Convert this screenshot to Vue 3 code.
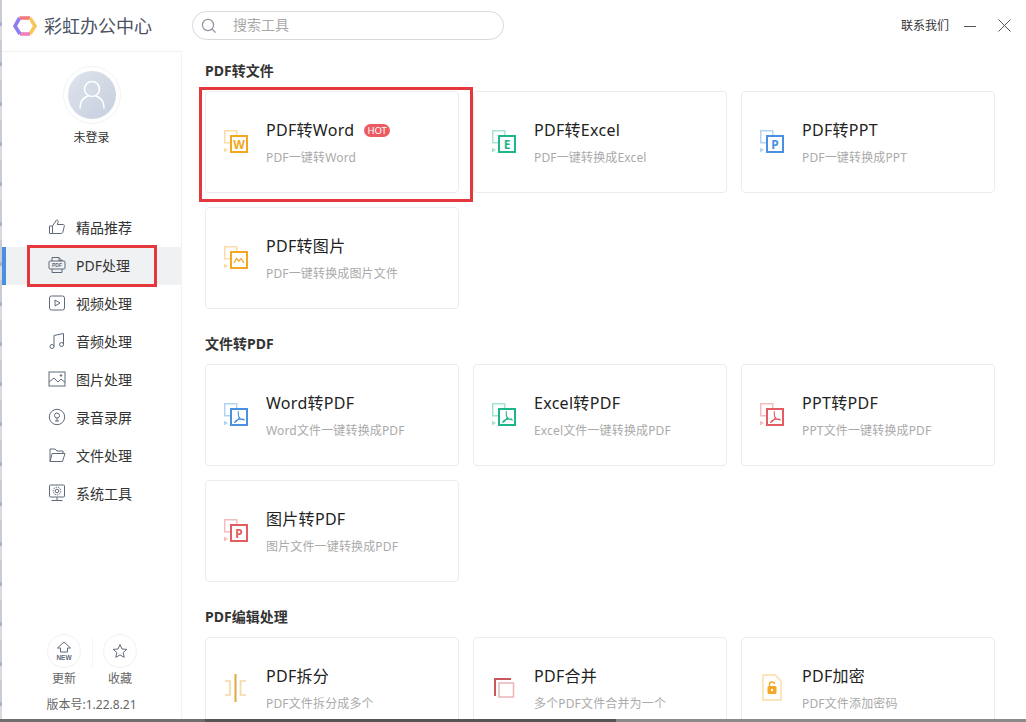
<script setup>
const menu = [
  { key: 'thumb', label: '精品推荐' },
  { key: 'pdf', label: 'PDF处理', active: true },
  { key: 'video', label: '视频处理' },
  { key: 'music', label: '音频处理' },
  { key: 'image', label: '图片处理' },
  { key: 'mic', label: '录音录屏' },
  { key: 'folder', label: '文件处理' },
  { key: 'system', label: '系统工具' }
]
const orange = '#f5a623'
const paleOrange = '#fbdca6'
const green = '#1fb58a'
const paleGreen = '#a5e3d2'
const blue = '#4a90e2'
const paleBlue = '#b3d3f6'
const red = '#e25c62'
const paleRed = '#f6bcc0'
const sections = [
  {
    title: 'PDF转文件',
    cards: [
      { title: 'PDF转Word', desc: 'PDF一键转Word', color: orange, pale: paleOrange, glyph: 'W', hot: true },
      { title: 'PDF转Excel', desc: 'PDF一键转换成Excel', color: green, pale: paleGreen, glyph: 'E' },
      { title: 'PDF转PPT', desc: 'PDF一键转换成PPT', color: blue, pale: paleBlue, glyph: 'P' },
      { title: 'PDF转图片', desc: 'PDF一键转换成图片文件', color: orange, pale: paleOrange, glyph: 'pic' }
    ]
  },
  {
    title: '文件转PDF',
    cards: [
      { title: 'Word转PDF', desc: 'Word文件一键转换成PDF', color: blue, pale: paleBlue, glyph: 'acro' },
      { title: 'Excel转PDF', desc: 'Excel文件一键转换成PDF', color: green, pale: paleGreen, glyph: 'acro' },
      { title: 'PPT转PDF', desc: 'PPT文件一键转换成PDF', color: red, pale: paleRed, glyph: 'acro' },
      { title: '图片转PDF', desc: '图片文件一键转换成PDF', color: red, pale: paleRed, glyph: 'P' }
    ]
  },
  {
    title: 'PDF编辑处理',
    cards: [
      { title: 'PDF拆分', desc: 'PDF文件拆分成多个', glyph: 'split' },
      { title: 'PDF合并', desc: '多个PDF文件合并为一个', glyph: 'merge' },
      { title: 'PDF加密', desc: 'PDF文件添加密码', glyph: 'lock' }
    ]
  }
]
</script>

<template>
  <div class="window">
    <div class="body">
      <header class="topbar">
        <div class="brand">
          <svg class="logo" viewBox="0 0 24 24" width="24" height="24" fill="none" stroke-width="3.6">
            <path d="M6.5 4 H17" stroke="#f47a78" />
            <path d="M17 4 L22 12 L17 20" stroke="#f8c65c" />
            <path d="M17 20 H7" stroke="#ef7fb8" />
            <path d="M7 20 L2 12 L6.5 4" stroke="#8f7cf0" />
          </svg>
          <span class="brand-name">彩虹办公中心</span>
        </div>
        <div class="search">
          <svg viewBox="0 0 16 16" width="16" height="16" fill="none" stroke="#8f959e" stroke-width="1.2">
            <circle cx="7" cy="7" r="5.6" /><path d="M11 11 L14.6 14.6" />
          </svg>
          <span>搜索工具</span>
        </div>
        <div class="top-right">
          <span class="contact">联系我们</span>
          <svg viewBox="0 0 12 12" width="12" height="12" fill="none" stroke="#555" stroke-width="1"><path d="M0 6.5 H12" /></svg>
          <svg class="close" viewBox="0 0 13 13" width="13" height="13" fill="none" stroke="#555" stroke-width="1"><path d="M.5 .5 L12.5 12.5 M12.5 .5 L.5 12.5" /></svg>
        </div>
      </header>
      <div class="columns">
        <aside class="sidebar">
          <div class="profile">
            <div class="avatar-ring">
              <div class="avatar">
                <svg viewBox="0 0 48 48" width="48" height="48" fill="none" stroke="#fff" stroke-width="1.6">
                  <circle cx="24" cy="18" r="7.5" />
                  <path d="M12 37 C12 29 17 26 20 25 M36 37 C36 29 31 26 28 25" stroke-linecap="round" />
                </svg>
              </div>
            </div>
            <div class="login">未登录</div>
          </div>
          <nav class="menu">
            <div v-for="m in menu" :key="m.key" class="menu-item" :class="{ active: m.active }">
              <svg viewBox="0 0 18 18" width="18" height="18" fill="none" stroke="#5f6b7a" stroke-width="1">
                <template v-if="m.key === 'thumb'">
                  <path d="M1.5 8 H4.5 V15.5 H1.5 Z M4.5 8 L8.5 2 C10 2 10.5 3.2 10 4.5 L9.3 6.5 H15 C16 6.5 16.6 7.3 16.3 8.3 L14.8 14.3 C14.6 15 14 15.5 13.3 15.5 H4.5" />
                </template>
                <template v-else-if="m.key === 'pdf'">
                  <path d="M4 5 V1.5 H11 L14 4.5 V5 M11 1.5 V4.5 H14" />
                  <rect x="1" y="5" width="16" height="8" rx="1" />
                  <path d="M4 13 V16.5 H14 V13" />
                  <text x="9" y="11.3" text-anchor="middle" class="pdf-mini">PDF</text>
                </template>
                <template v-else-if="m.key === 'video'">
                  <rect x="1.5" y="2" width="15" height="14" rx="2" />
                  <path d="M7 6 L12 9 L7 12 Z" />
                </template>
                <template v-else-if="m.key === 'music'">
                  <path d="M6 14.5 V3.5 L15.5 1.5 V12.5" />
                  <circle cx="4" cy="14.5" r="2" /><circle cx="13.5" cy="12.5" r="2" />
                </template>
                <template v-else-if="m.key === 'image'">
                  <rect x="1" y="2" width="16" height="14" />
                  <path d="M1 12 L6 8 L10 12 L13 9 L17 12.5" />
                  <circle cx="13" cy="5.5" r=".8" fill="#5f6b7a" />
                </template>
                <template v-else-if="m.key === 'mic'">
                  <circle cx="9" cy="9" r="7.7" />
                  <circle cx="9" cy="7.5" r="2.5" />
                  <path d="M9 10 V13 M7 13 H11" />
                </template>
                <template v-else-if="m.key === 'folder'">
                  <path d="M2 15.5 V3 H7 L9 5 H15 V7.5 M2 15.5 H14.5 L17 7.5 H4.2 L2 15.5" />
                </template>
                <template v-else>
                  <rect x="1.5" y="1" width="15" height="12" rx="1" />
                  <circle cx="9" cy="7" r="3.8" stroke-dasharray="1.5 .8" />
                  <circle cx="9" cy="7" r="1.8" />
                  <path d="M9 13 V16 M3.5 16.5 H14.5" />
                </template>
              </svg>
              <span>{{ m.label }}</span>
            </div>
          </nav>
          <div class="side-foot">
            <div class="foot-actions">
              <div class="foot-action">
                <div class="foot-circle">
                  <svg viewBox="0 0 20 20" width="20" height="20" fill="none" stroke="#5f6b7a" stroke-width="1">
                    <path d="M3.5 7 L10 1 L16.5 7 H13.5 V11 H6.5 V7 Z" />
                    <text x="10" y="19" text-anchor="middle" class="new-mini">NEW</text>
                  </svg>
                </div>
                <span>更新</span>
              </div>
              <div class="foot-divider"></div>
              <div class="foot-action">
                <div class="foot-circle">
                  <svg viewBox="0 0 16 16" width="16" height="16" fill="none" stroke="#5f6b7a" stroke-width="1">
                    <path d="M8 1.5 L10 6 L14.8 6.4 L11.2 9.6 L12.2 14.4 L8 11.9 L3.8 14.4 L4.8 9.6 L1.2 6.4 L6 6 Z" stroke-linejoin="round" />
                  </svg>
                </div>
                <span>收藏</span>
              </div>
            </div>
            <div class="version">版本号:1.22.8.21</div>
          </div>
        </aside>
        <main class="content">
          <section v-for="s in sections" :key="s.title" class="section">
            <h2 class="section-title">{{ s.title }}</h2>
            <div class="grid">
              <div v-for="c in s.cards" :key="c.title" class="card">
                <svg class="card-icon" viewBox="0 0 24 30" width="24" height="30" fill="none">
                  <template v-if="c.glyph === 'split'">
                    <path d="M11.5 1 V29" stroke="#e0a840" stroke-width="2" />
                    <path d="M1 8 H6 V22 H1 M22 8 H16.5 V22 H22" stroke="#f6d9a3" stroke-width="1.6" />
                  </template>
                  <template v-else-if="c.glyph === 'merge'">
                    <path d="M3 23 V6 H19" stroke="#c9585e" stroke-width="2" />
                    <rect x="7" y="10" width="14.5" height="14" stroke="#eab8ba" stroke-width="1.6" />
                  </template>
                  <template v-else-if="c.glyph === 'lock'">
                    <path d="M3 2 H15 L21 8 V27 H3 Z" stroke="#fbdca6" stroke-width="1.4" stroke-linejoin="round" />
                    <rect x="7.5" y="13" width="9" height="8" rx="1.5" fill="#f5a623" />
                    <path d="M9.5 13 V11 C9.5 8.3 14.5 8.3 14.5 11" stroke="#f5a623" stroke-width="1.4" />
                    <circle cx="12" cy="17" r="1.2" fill="#fff" />
                  </template>
                  <template v-else>
                    <rect x=".75" y="3.75" width="12" height="12" stroke-width="1.5" :stroke="c.pale" />
                    <path d="M0 20.5 L4 23 L0 25.5 Z" :fill="c.pale" />
                    <rect x="7" y="9" width="16" height="16" fill="#fff" stroke-width="2" :stroke="c.color" />
                    <text v-if="c.glyph.length === 1" x="15" y="21.5" text-anchor="middle" class="glyph" :fill="c.color">{{ c.glyph }}</text>
                    <path v-else-if="c.glyph === 'pic'" d="M10 20 L12.5 15.5 L15 18 L17 15.5 L20 20" :stroke="c.color" stroke-width="1.2" />
                    <path v-else d="M15 11.5 C13.5 11.5 14.5 16 15 17 C15.5 18 13 22 10 22.5 M15 17 C16 19 18 20 21 20 M11 21.5 C13 19 17 19 20 19" :stroke="c.color" stroke-width="1.1" />
                  </template>
                </svg>
                <div class="card-text">
                  <div class="card-title">
                    <span>{{ c.title }}</span>
                    <span v-if="c.hot" class="hot">HOT</span>
                  </div>
                  <div class="card-desc">{{ c.desc }}</div>
                </div>
              </div>
            </div>
          </section>
        </main>
      </div>
    </div>
    <div class="mark mark-side"></div>
    <div class="mark mark-card"></div>
  </div>
</template>

<style>
html, body { margin: 0; background: #fff; }
</style>

<style scoped>
.window {
  position: relative;
  width: 1026px;
  height: 722px;
  overflow: hidden;
  box-sizing: border-box;
  padding: 0 0 3px 2px;
  background: linear-gradient(90deg, #6e6e6e 0 20%, #555 20% 60%, #8a8a8a 60% 100%);
  font-family: "Noto Sans", "Noto Sans CJK SC", sans-serif;
  color: #333;
}
.window::before {
  content: "";
  position: absolute;
  left: 0;
  top: 0;
  bottom: 3px;
  width: 2px;
  background: repeating-linear-gradient(180deg, #c9ccd2 0 22px, #a6b4cc 22px 26px, #d9dade 26px 40px);
}
.body { height: 100%; background: #fff; display: flex; flex-direction: column; }
.topbar { height: 51px; flex: none; display: flex; align-items: center; padding-left: 11px; box-sizing: border-box; }
.brand { display: flex; align-items: center; width: 179px; gap: 7px; }
.brand-name { font-size: 18px; color: #4b5263; line-height: 24px; }
.search {
  width: 312px; height: 29px; box-sizing: border-box;
  border: 1px solid #d6d8dc; border-radius: 15px;
  display: flex; align-items: center; gap: 16px; padding-left: 8px;
  font-size: 14px; color: #aaa;
}
.search span { margin-bottom: 4px; }
.top-right { margin-left: auto; display: flex; align-items: center; padding-right: 15px; }
.contact { font-size: 12px; color: #333; margin-right: 15px; margin-bottom: 2px; }
.close { margin-left: 22px; }
.columns { flex: 1; min-height: 0; display: flex; }
.sidebar {
  width: 180px; flex: none; box-sizing: border-box;
  border-top: 1px solid #f1f2f4; border-right: 1px solid #f1f2f4;
  display: flex; flex-direction: column;
}
.profile { display: flex; flex-direction: column; align-items: center; padding-top: 14px; }
.avatar-ring {
  width: 58px; height: 58px; box-sizing: border-box; border-radius: 50%;
  border: 1px solid #f2f3f5; display: flex; align-items: center; justify-content: center;
}
.avatar {
  width: 48px; height: 48px; border-radius: 50%;
  background: linear-gradient(135deg, #dfe4ec, #c6cfde);
  display: flex;
}
.login { font-size: 12px; line-height: 18px; margin-top: 5px; color: #333; }
.menu { margin-top: 62px; }
.menu-item {
  height: 38px; display: flex; align-items: center; gap: 10px;
  padding-left: 46px; box-sizing: border-box;
  font-size: 14px; color: #333;
}
.menu-item span { margin-bottom: 2px; }
.menu-item svg { margin-bottom: 2px; }
.menu-item.active { background: #f0f1f3; box-shadow: inset 4px 0 0 #4a90e2; }
.pdf-mini { font-size: 5px; font-weight: 700; fill: #5f6b7a; stroke: none; font-family: "Liberation Sans", sans-serif; }
.new-mini { font-size: 6.5px; font-weight: 700; fill: #5f6b7a; stroke: none; font-family: "Liberation Sans", sans-serif; }
.side-foot { margin-top: auto; padding-bottom: 5px; display: flex; flex-direction: column; align-items: center; }
.foot-actions { display: flex; padding-left: 1px; }
.foot-divider { width: 1px; height: 30px; margin: 4px 10px 0 11px; background: #f4f5f6; }
.foot-action { width: 34px; display: flex; flex-direction: column; align-items: center; font-size: 12px; color: #666; line-height: 18px; }
.foot-circle {
  width: 34px; height: 34px; box-sizing: border-box; border-radius: 50%;
  border: 1px solid #f0f1f3; display: flex; align-items: center; justify-content: center;
  margin-bottom: 2px;
}
.version { font-size: 12px; line-height: 18px; color: #666; margin-top: 8px; }
.content { flex: 1; min-width: 0; overflow: hidden; padding: 10px 31px 0 23px; }
.section { margin-bottom: 25px; }
.section-title { margin: 0 0 10px; font-size: 14px; font-weight: 700; line-height: 20px; color: #333; }
.grid { display: grid; grid-template-columns: repeat(3, 254px); gap: 14px; }
.card {
  height: 102px; box-sizing: border-box;
  border: 1px solid #ececf0; border-radius: 4px;
  display: flex; align-items: center; padding-left: 18px; gap: 18px;
}
.card-icon { flex: none; }
.card-text { padding-top: 2px; }
.glyph { font-size: 12px; font-weight: 700; font-family: "Noto Sans", sans-serif; }
.card-title { font-size: 16px; line-height: 24px; color: #222; display: flex; align-items: center; gap: 10px; letter-spacing: .3px; }
.hot {
  font-size: 9.5px; line-height: 13px; height: 13px; padding: 0 3px; border-radius: 7px;
  background: #ec5b63; color: #fff; letter-spacing: 0;
}
.card-desc { font-size: 12px; line-height: 20px; margin-top: 6px; color: #aaa; letter-spacing: .15px; }
.mark { position: absolute; box-sizing: border-box; border: 3px solid #e5383d; pointer-events: none; }
.mark-side { left: 27px; top: 245px; width: 130px; height: 42px; }
.mark-card { left: 199px; top: 87px; width: 274px; height: 115px; }
</style>
